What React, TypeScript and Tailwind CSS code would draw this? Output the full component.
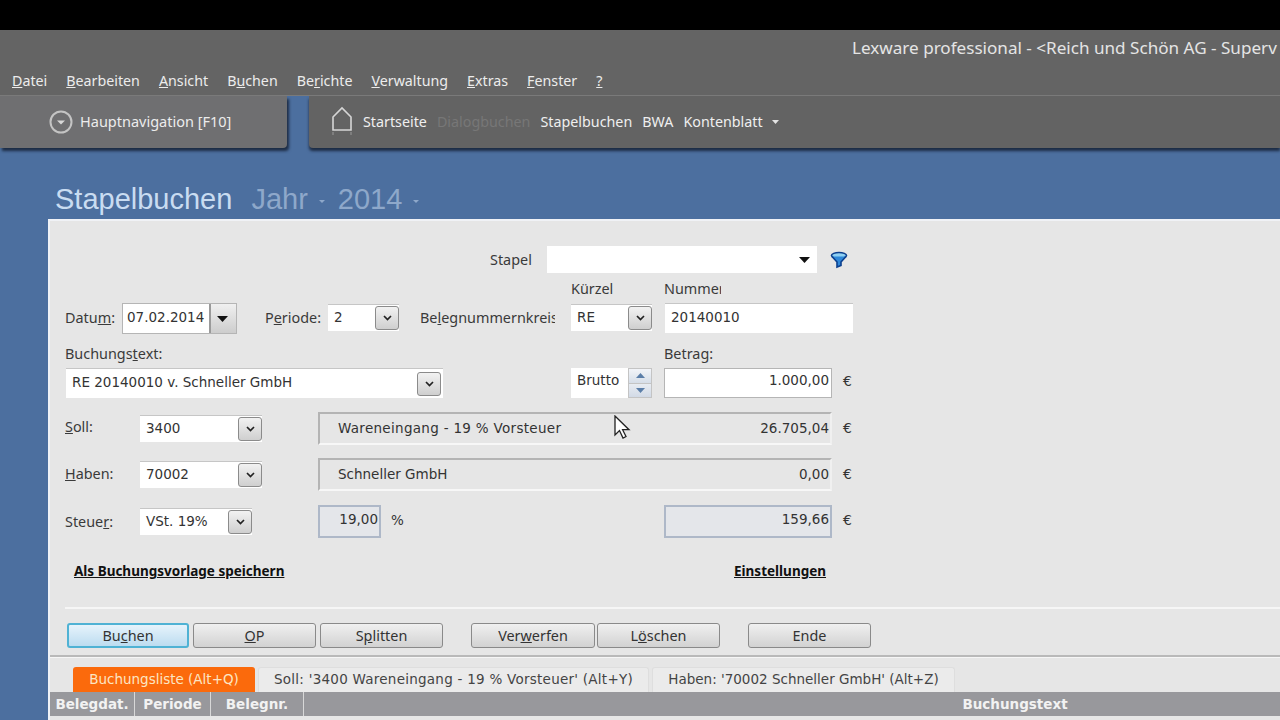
import type { ReactNode } from "react";

const label = "text-[14.4px] leading-5 text-[#3a3a3a] whitespace-nowrap";
const value = "font-['DejaVu_Sans'] text-[13.5px] text-[#333] whitespace-nowrap";

function Arrow({ className = "" }: { className?: string }) {
  return (
    <svg width="11" height="6" viewBox="0 0 11 6" className={className}>
      <path d="M0 0h11L5.5 6z" fill="#111" />
    </svg>
  );
}

function Dot() {
  return (
    <svg width="6" height="3" viewBox="0 0 6 3" className="mt-[4px]">
      <path d="M0 0h6L3 3z" fill="#8ea8ca" />
    </svg>
  );
}

// small square combo button with the chevron
function ComboButton() {
  return (
    <div className="flex h-[24px] w-[24px] shrink-0 items-center justify-center rounded-[3px] border border-[#8b8b8b] bg-gradient-to-b from-[#f2f2f2] to-[#cfcfcf]">
      <svg width="9" height="6" viewBox="0 0 9 6">
        <path d="M1 1l3.5 3.5L8 1" fill="none" stroke="#222" strokeWidth="1.7" />
      </svg>
    </div>
  );
}

function Combo({ text, width }: { text: string; width: string }) {
  return (
    <div className={`flex h-[27px] items-center justify-between border-t border-[#c6c6c6] bg-white pl-[6px] ${width}`}>
      <span className={`${value} pb-[2px]`}>{text}</span>
      <ComboButton />
    </div>
  );
}

function ReadOnlyBox({ left, right, width, wide }: { left?: string; right: string; width: string; wide?: boolean }) {
  return (
    <div className={`flex h-[33px] items-center justify-between border-2 border-t-[#b4b4b4] border-l-[#b4b4b4] border-b-[#f7f7f7] border-r-[#f0f0f0] bg-[#e6e6e6] pl-[18px] pr-[1px] ${width}`}>
      <span className={`${value} ${wide ? "tracking-[0.3px]" : ""}`}>{left}</span>
      <span className={value}>{right}</span>
    </div>
  );
}

function CalcBox({ text, width }: { text: string; width: string }) {
  return (
    <div className={`flex h-[33px] items-center justify-end border-2 border-[#aeb8c8] bg-[#e4e6ea] pb-[4px] pr-[1px] ${width}`}>
      <span className={value}>{text}</span>
    </div>
  );
}

function Euro({ className = "" }: { className?: string }) {
  return <span className={`ml-[11px] font-['DejaVu_Sans'] text-[14px] text-[#333] ${className}`}>€</span>;
}

function Btn({ children, width, active }: { children: ReactNode; width: string; active?: boolean }) {
  return (
    <div
      className={`flex h-[25px] items-center justify-center rounded-[3px] text-[14.4px] text-[#333] ${width} ${
        active
          ? "border-2 border-[#4fb2d4] bg-gradient-to-b from-[#e6f3fb] to-[#bcdcf0]"
          : "border border-[#8a8a8a] bg-gradient-to-b from-[#f0f0f0] to-[#d2d2d2]"
      }`}
    >
      <span>{children}</span>
    </div>
  );
}

function HeadCell({ children, width }: { children: ReactNode; width: string }) {
  return (
    <div className={`flex h-full items-center justify-center border-r border-[#d8d8d8] pt-[1px] font-['DejaVu_Sans'] text-[13.5px] font-bold text-[#f2f2f2] ${width}`}>
      {children}
    </div>
  );
}

export default function App() {
  return (
    <div className="relative h-[720px] w-[1280px] overflow-hidden bg-[#4c6f9f] font-['Noto_Sans',sans-serif]">
      <div className="h-[30px] bg-black" />

      {/* title + menu */}
      <div className="h-[66px] border-b border-[#7a7a7a] bg-[#646464]">
        <div className="flex h-[35px] items-center pl-[852px]">
          <span className="whitespace-nowrap text-[17.1px] text-[#e4e4e4]">
            Lexware professional - &lt;Reich und Schön AG - Superv
          </span>
        </div>
        <div className="flex h-[30px] items-center gap-[19px] pl-[12px] pt-[2px] text-[14.25px] text-[#ececec]">
          <span><u>D</u>atei</span>
          <span><u>B</u>earbeiten</span>
          <span><u>A</u>nsicht</span>
          <span>B<u>u</u>chen</span>
          <span>Be<u>r</u>ichte</span>
          <span><u>V</u>erwaltung</span>
          <span><u>E</u>xtras</span>
          <span><u>F</u>enster</span>
          <span><u>?</u></span>
        </div>
      </div>

      {/* navigation */}
      <div className="flex h-[52px]">
        <div className="flex w-[287px] items-center rounded-br-[4px] bg-[#6f6f71] pl-[49px] shadow-[2px_3px_3px_#1d2c44]">
          <svg width="24" height="24" viewBox="0 0 24 24">
            <circle cx="12" cy="12" r="10.5" fill="none" stroke="#c4c4c4" strokeWidth="2" />
            <path d="M8 10.5h8L12 14.5z" fill="#d8d8d8" />
          </svg>
          <span className="ml-[7px] whitespace-nowrap text-[14.5px] text-[#ececec]">Hauptnavigation [F10]</span>
        </div>
        <div className="ml-[22px] flex flex-1 items-center rounded-bl-[4px] bg-[#636363] pl-[22px] shadow-[0_3px_3px_#1d2c44]">
          <svg width="22" height="30" viewBox="0 0 22 30" className="mb-[3px]">
            <path d="M2 11L11 2l9 9v13H2z" fill="none" stroke="#d6d6d6" strokeWidth="1.6" />
            <path d="M2 26v3M20 26v3" stroke="#8a8a8a" strokeWidth="1.4" />
          </svg>
          <div className="ml-[10px] flex items-center gap-[10px] text-[14.3px] text-[#efefef]">
            <span>Startseite</span>
            <span className="text-[#777777]">Dialogbuchen</span>
            <span>Stapelbuchen</span>
            <span>BWA</span>
            <span>Kontenblatt</span>
          </div>
          <svg width="7" height="4" viewBox="0 0 7 4" className="ml-[9px]">
            <path d="M0 0h7L3.5 4z" fill="#e4e4e4" />
          </svg>
        </div>
      </div>

      {/* page title */}
      <div className="flex h-[71px] items-center pl-[55px] pt-[32px] font-['Liberation_Sans',sans-serif] text-[29px] leading-[33px]">
        <span className="text-[#c9dcf1]">Stapelbuchen</span>
        <span className="ml-[19px] text-[#8ea8ca]">Jahr</span>
        <span className="ml-[11px]"><Dot /></span>
        <span className="ml-[13px] text-[#8ea8ca]">2014</span>
        <span className="ml-[11px]"><Dot /></span>
      </div>

      {/* form */}
      <div className="ml-[48px] h-[501px] border-l-2 border-t-2 border-[#f0f2f6] bg-[#e6e6e6]">
        <div className="pl-[15px] pt-[25px]">
          <div className="flex h-[27px] items-center pl-[425px]">
            <span className={`${label} w-[57px]`}>Stapel</span>
            <div className="flex h-[27px] w-[270px] items-center justify-end bg-white pr-[7px]">
              <Arrow />
            </div>
            <svg width="18" height="18" viewBox="0 0 18 18" className="ml-[13px]">
              <ellipse cx="9" cy="4.5" rx="7.5" ry="3" fill="#8fd0f2" stroke="#0b3f8e" strokeWidth="1.6" />
              <path d="M2 5.5l5 5.5v5l4-1.5V11l5-5.5" fill="#2f87d8" stroke="#0b3f8e" strokeWidth="1.6" />
            </svg>
          </div>

          <div className="mt-[6px] flex h-[20px] items-center pl-[506px]">
            <span className={`${label} w-[93px]`}>Kürzel</span>
            <span className={`${label} w-[57px] overflow-hidden`}>Nummer</span>
          </div>

          <div className="mt-[4px] flex h-[30px] items-start">
            <span className={`${label} mt-[5px] w-[57px]`}>Datu<u>m</u>:</span>
            <div className="flex h-[31px] w-[115px] border border-[#b5b5b5] bg-white">
              <span className={`${value} flex flex-1 items-center pb-[2px] pl-[4px]`}>07.02.2014</span>
              <div className="flex w-[27px] items-center justify-center border-l-2 border-[#9a9a9a] bg-gradient-to-b from-[#f0f0f0] to-[#cdcdcd] pr-[3px]">
                <Arrow />
              </div>
            </div>
            <span className={`${label} ml-[28px] mt-[5px] w-[63px]`}>P<u>e</u>riode:</span>
            <div className="mt-[1px]"><Combo text="2" width="w-[71px]" /></div>
            <span className={`${label} ml-[21px] mt-[5px] w-[135px] overflow-hidden`}>Be<u>l</u>egnummernkreis</span>
            <div className="ml-[16px] mt-[1px]">
              <Combo text="RE" width="w-[81px]" />
            </div>
            <div className={`${value} ml-[13px] flex h-[30px] w-[188px] items-center border-t border-[#c6c6c6] bg-white pb-[2px] pl-[6px]`}>20140010</div>
          </div>

          <div className="mt-[11px] flex h-[20px] items-center">
            <span className={`${label} w-[599px]`}>Buchungs<u>t</u>ext:</span>
            <span className={label}>Betrag:</span>
          </div>

          <div className="mt-[4px] flex h-[30px] items-center">
            <div className="ml-[1px] flex h-[30px] w-[377px] items-center justify-between border-t border-[#c6c6c6] bg-white pl-[6px] pr-[2px]">
              <span className={`${value} pb-[2px]`}>RE 20140010 v. Schneller GmbH</span>
              <ComboButton />
            </div>
            <div className="ml-[128px] flex h-[30px] w-[81px] items-center bg-white pl-[6px]">
              <span className={`${value} pb-[5px]`}>Brutto</span>
              <div className="ml-auto flex h-full w-[24px] flex-col border border-[#c4c4c4]">
                <div className="flex flex-1 items-center justify-center border-b border-[#c4c4c4] bg-gradient-to-b from-[#f2f4f8] to-[#d6dee8]">
                  <svg width="9" height="5" viewBox="0 0 9 5"><path d="M0 5h9L4.5 0z" fill="#5b7ea8" /></svg>
                </div>
                <div className="flex flex-1 items-center justify-center bg-gradient-to-b from-[#e8ecf2] to-[#d2dae6]">
                  <svg width="9" height="5" viewBox="0 0 9 5"><path d="M0 0h9L4.5 5z" fill="#5b7ea8" /></svg>
                </div>
              </div>
            </div>
            <div className={`${value} ml-[12px] flex h-[30px] w-[168px] items-center justify-end border border-[#b5b5b5] bg-white pb-[5px] pr-[2px]`}>1.000,00</div>
            <Euro className="mb-[3px]" />
          </div>

          <div className="mt-[14px] flex h-[33px] items-center">
            <span className={`${label} mb-[3px] w-[75px]`}><u>S</u>oll:</span>
            <Combo text="3400" width="w-[122px]" />
            <div className="ml-[56px]">
              <ReadOnlyBox left="Wareneingang - 19 % Vorsteuer" right="26.705,04" width="w-[514px]" wide />
            </div>
            <Euro />
          </div>

          <div className="mt-[13px] flex h-[33px] items-center">
            <span className={`${label} mb-[1px] w-[75px]`}><u>H</u>aben:</span>
            <Combo text="70002" width="w-[122px]" />
            <div className="ml-[56px]">
              <ReadOnlyBox left="Schneller GmbH" right="0,00" width="w-[514px]" />
            </div>
            <Euro />
          </div>

          <div className="mt-[14px] flex h-[33px] items-center">
            <span className={`${label} w-[75px]`}>Steue<u>r</u>:</span>
            <Combo text="VSt. 19%" width="w-[112px]" />
            <div className="ml-[66px]">
              <CalcBox text="19,00" width="w-[63px]" />
            </div>
            <span className={`${value} mb-[2px] ml-[10px] w-[273px]`}>%</span>
            <CalcBox text="159,66" width="w-[168px]" />
            <Euro className="mb-[2px]" />
          </div>

          <div className="mt-[23px] flex h-[20px] items-center pl-[9px] text-[13.5px] font-bold text-[#111] underline">
            <span className="w-[660px]">Als Buchungsvorlage speichern</span>
            <span>Einstellungen</span>
          </div>

          <div className="mt-[26px] h-[2px] bg-[#f6f6f6]" />

          <div className="mt-[14px] flex items-center pl-[2px]">
            <Btn width="w-[122px]" active>Bu<u>c</u>hen</Btn>
            <div className="ml-[4px]"><Btn width="w-[123px]"><u>O</u>P</Btn></div>
            <div className="ml-[4px]"><Btn width="w-[123px]">S<u>p</u>litten</Btn></div>
            <div className="ml-[28px]"><Btn width="w-[124px]">Ver<u>w</u>erfen</Btn></div>
            <div className="ml-[2px]"><Btn width="w-[123px]">L<u>ö</u>schen</Btn></div>
            <div className="ml-[28px]"><Btn width="w-[123px]">Ende</Btn></div>
          </div>
        </div>

        <div className="mt-[7px] h-[3px] border-b border-[#f6f6f6] bg-[#b9b9b9]" />

        <div className="mt-[9px] flex h-[25px] items-end pl-[23px] font-['DejaVu_Sans'] text-[13.5px]">
          <div className="flex h-[25px] w-[182px] items-center justify-center rounded-t-[3px] bg-[#fb6a0c] pb-[1px] text-[#fbe6c4]">Buchungsliste (Alt+Q)</div>
          <div className="ml-[3px] flex h-[25px] w-[391px] items-center justify-center rounded-t-[3px] border border-b-0 border-[#dedede] bg-[#ebebeb] pb-[1px] tracking-[0.25px] text-[#444]">Soll: '3400 Wareneingang - 19 % Vorsteuer' (Alt+Y)</div>
          <div className="ml-[3px] flex h-[25px] w-[303px] items-center justify-center rounded-t-[3px] border border-b-0 border-[#dedede] bg-[#ebebeb] pb-[1px] text-[#444]">Haben: '70002 Schneller GmbH' (Alt+Z)</div>
        </div>

        <div className="flex h-[24px] items-center bg-[#98989c]">
          <HeadCell width="w-[85px]">Belegdat.</HeadCell>
          <HeadCell width="w-[76px]">Periode</HeadCell>
          <HeadCell width="w-[93px]">Belegnr.</HeadCell>
          <div className="flex h-full flex-1 items-center justify-center pl-[446px] pt-[1px] font-['DejaVu_Sans'] text-[13.5px] font-bold text-[#f2f2f2]">Buchungstext</div>
        </div>
      </div>

      {/* mouse pointer */}
      <svg width="18" height="26" viewBox="0 0 18 26" className="absolute left-[613px] top-[415px]">
        <path d="M2 1v19l4.5-4.5L10 23l3-1.5-3.4-6.8H16z" fill="#fff" stroke="#222" strokeWidth="1.3" />
      </svg>
    </div>
  );
}
